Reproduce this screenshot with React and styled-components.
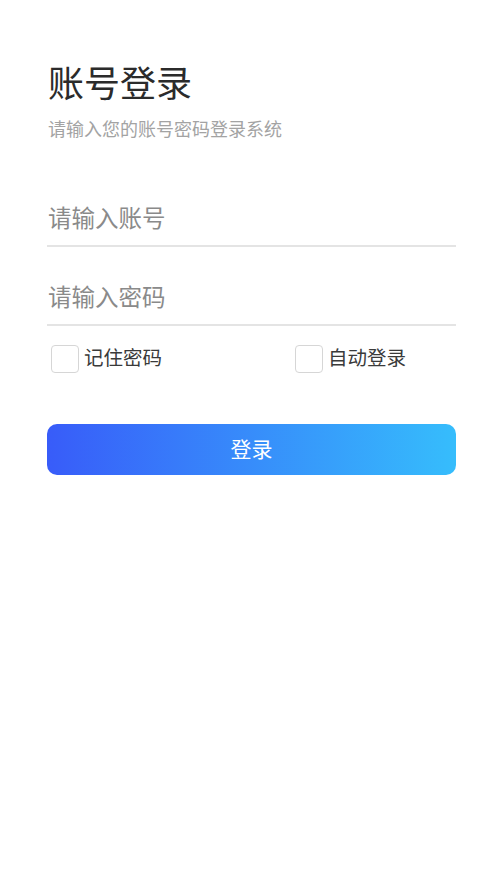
import React from "react";
import styled, { createGlobalStyle } from "styled-components";

const Global = createGlobalStyle`
  html, body { margin: 0; padding: 0; background: #fff; }
  body { font-family: "Noto Sans CJK SC", "Noto Sans", sans-serif; }
`;

const Page = styled.div`
  width: 497px;
  min-height: 883px;
  box-sizing: border-box;
  padding: 55px 41px 0 47px;
  background: #fff;
`;

const Title = styled.h1`
  margin: 0 0 0 1px;
  font-size: 36px;
  font-weight: 400;
  line-height: 52px;
  color: #2b2b2b;
`;

const Subtitle = styled.p`
  margin: 8px 0 0 1px;
  font-size: 18px;
  line-height: 26px;
  color: #a3a3a3;
`;

const Form = styled.div`
  margin-top: 27px;
  display: flex;
  flex-direction: column;
`;

const Field = styled.div`
  height: 79px;
  box-sizing: border-box;
  border-bottom: 2px solid #e4e4e4;
  display: flex;
  align-items: flex-end;
  padding: 0 0 12px 1px;
`;

const Placeholder = styled.span`
  font-size: 23.5px;
  line-height: 32px;
  color: #8a8a8a;
`;

const Options = styled.div`
  display: grid;
  grid-template-columns: 244px 1fr;
  margin-top: 19px;
  padding-left: 4px;
`;

const Check = styled.label`
  display: flex;
  align-items: center;
  gap: 5px;
  font-size: 19.5px;
  line-height: 28px;
  color: #3a3a3a;
`;

const Label = styled.span`
  position: relative;
  top: -2px;
`;

const Box = styled.span`
  width: 26px;
  height: 26px;
  border: 1px solid #d6d6d6;
  border-radius: 4px;
  background: #fff;
`;

const Button = styled.button`
  margin-top: 51px;
  height: 51px;
  width: 100%;
  border: none;
  border-radius: 10px;
  padding: 0 0 4px;
  background: linear-gradient(90deg, #385cf9 0%, #36bdfc 100%);
  color: #fff;
  font-family: inherit;
  font-size: 21px;
  cursor: pointer;
`;

export default function App() {
  return (
    <>
      <Global />
      <Page>
        <Title>账号登录</Title>
        <Subtitle>请输入您的账号密码登录系统</Subtitle>
        <Form>
          <Field>
            <Placeholder>请输入账号</Placeholder>
          </Field>
          <Field>
            <Placeholder>请输入密码</Placeholder>
          </Field>
          <Options>
            <Check>
              <Box />
              <Label>记住密码</Label>
            </Check>
            <Check>
              <Box />
              <Label>自动登录</Label>
            </Check>
          </Options>
          <Button>登录</Button>
        </Form>
      </Page>
    </>
  );
}
